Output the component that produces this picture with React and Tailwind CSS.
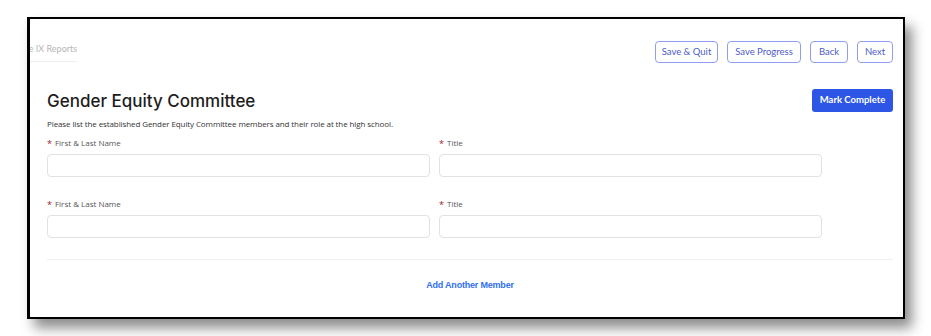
export default function App() {
  const buttons = [
    { label: 'Save & Quit', w: 'w-[63px]' },
    { label: 'Save Progress', w: 'w-[74px]' },
    { label: 'Back', w: 'w-[38px]' },
    { label: 'Next', w: 'w-[36px]' },
  ]

  const Field = ({ label }) => (
    <div className="w-[383px]">
      <div className="flex items-center gap-[3px] h-[12px] text-[8px] text-[#555] font-['Open_Sans',sans-serif]">
        <span className="text-[#a3142b] text-[9px] leading-none">*</span>
        <span>{label}</span>
      </div>
      <div className="mt-[5px] h-[23px] rounded-[4px] border border-[#e2e2e2] bg-white" />
    </div>
  )

  return (
    <div className="w-[931px] h-[336px] bg-white pl-[27px] pt-[17px] font-['Inter',sans-serif]">
      <div className="w-[878px] h-[302px] border-2 border-l-[3px] border-black bg-white shadow-[7px_9px_12px_rgba(0,0,0,0.45)] pl-[17px] pr-[10px]">
        {/* top bar */}
        <div className="flex items-start pt-[22px]">
          <div className="-ml-[17px] w-[47px] overflow-hidden">
            <div className="h-[21px] border-b border-[#eeeeee] text-[9px] text-[#b5b5b5] whitespace-nowrap -ml-[14px] leading-[14px] pt-[1px] font-['Lato',sans-serif]">
              Title IX Reports
            </div>
          </div>
          <div className="ml-auto flex gap-[9px]">
            {buttons.map((b) => (
              <button
                key={b.label}
                className={`${b.w} h-[22px] rounded-[4px] border border-[#8e9ef2] text-[9.5px] text-[#4d5cc8] bg-white font-['Lato',sans-serif]`}
              >
                {b.label}
              </button>
            ))}
          </div>
        </div>

        {/* header */}
        <div className="flex items-start justify-between mt-[26px]">
          <h1 className="text-[17px] font-medium text-[#1d1d1d] leading-[22px] mt-[1px]">
            Gender Equity Committee
          </h1>
          <button className="w-[81px] h-[23px] rounded-[3px] bg-[#2d55e6] text-white text-[9.5px] font-bold font-['Lato',sans-serif]">
            Mark Complete
          </button>
        </div>

        <p className="mt-[6px] text-[8px] tracking-[-0.1px] text-[#333] font-['Open_Sans',sans-serif] leading-[12px]">
          Please list the established Gender Equity Committee members and their role at the high school.
        </p>

        <div className="mt-[7px] flex gap-[9px]">
          <Field label="First & Last Name" />
          <Field label="Title" />
        </div>
        <div className="mt-[21px] flex gap-[9px]">
          <Field label="First & Last Name" />
          <Field label="Title" />
        </div>

        <div className="mt-[21px] border-t border-[#efefef]" />

        <div className="mt-[19px] text-center text-[9px] font-bold text-[#2f6ff0] font-['Liberation_Sans',sans-serif] tracking-[-0.2px]">
          Add Another Member
        </div>
      </div>
    </div>
  )
}
